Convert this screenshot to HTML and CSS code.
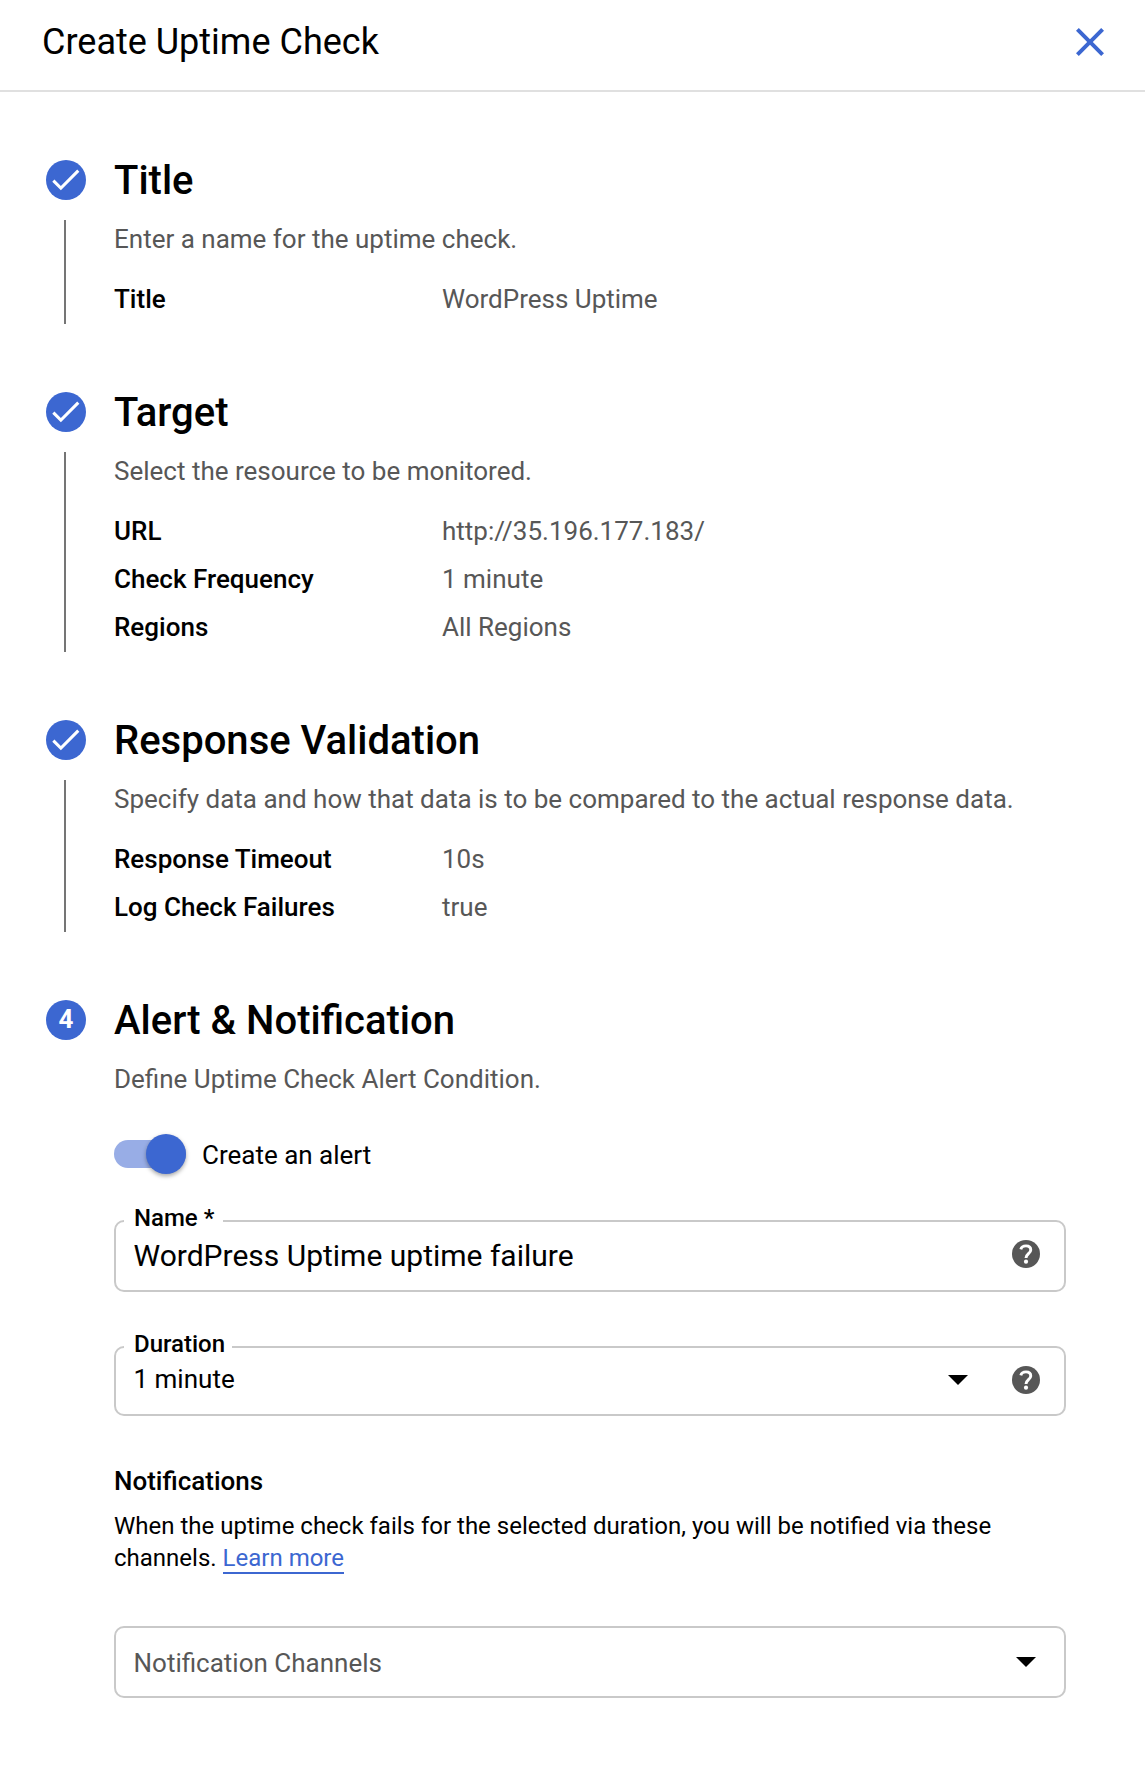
FILE: index.html
```html
<!DOCTYPE html>
<html lang="en">
<head>
<meta charset="utf-8">
<title>Create Uptime Check</title>
<link rel="stylesheet" href="styles.css">
</head>
<body>
<header class="header">
  <h1 class="header-title">Create Uptime Check</h1>
  <button class="close" aria-label="Close">
    <svg width="48" height="48" viewBox="0 0 24 24"><path d="M19 6.41L17.59 5 12 10.59 6.41 5 5 6.41 10.59 12 5 17.59 6.41 19 12 13.41 17.59 19 19 17.59 13.41 12z"/></svg>
  </button>
</header>
<main class="steps">
  <section class="step">
    <div class="rail">
      <span class="badge"><svg class="check" viewBox="0 0 24 24"><path d="M9 16.17L4.83 12l-1.42 1.41L9 19 21 7l-1.41-1.41z"/></svg></span>
      <span class="line"></span>
    </div>
    <div class="content">
      <h2 class="step-title">Title</h2>
      <p class="desc">Enter a name for the uptime check.</p>
      <dl class="summary">
        <dt>Title</dt><dd>WordPress Uptime</dd>
      </dl>
    </div>
  </section>
  <section class="step">
    <div class="rail">
      <span class="badge"><svg class="check" viewBox="0 0 24 24"><path d="M9 16.17L4.83 12l-1.42 1.41L9 19 21 7l-1.41-1.41z"/></svg></span>
      <span class="line"></span>
    </div>
    <div class="content">
      <h2 class="step-title">Target</h2>
      <p class="desc">Select the resource to be monitored.</p>
      <dl class="summary">
        <dt>URL</dt><dd>http://35.196.177.183/</dd>
        <dt>Check Frequency</dt><dd>1 minute</dd>
        <dt>Regions</dt><dd>All Regions</dd>
      </dl>
    </div>
  </section>
  <section class="step">
    <div class="rail">
      <span class="badge"><svg class="check" viewBox="0 0 24 24"><path d="M9 16.17L4.83 12l-1.42 1.41L9 19 21 7l-1.41-1.41z"/></svg></span>
      <span class="line"></span>
    </div>
    <div class="content">
      <h2 class="step-title">Response Validation</h2>
      <p class="desc">Specify data and how that data is to be compared to the actual response data.</p>
      <dl class="summary">
        <dt>Response Timeout</dt><dd>10s</dd>
        <dt>Log Check Failures</dt><dd>true</dd>
      </dl>
    </div>
  </section>
  <section class="step">
    <div class="rail"><span class="badge">4</span></div>
    <div class="content">
      <h2 class="step-title">Alert &amp; Notification</h2>
      <p class="desc">Define Uptime Check Alert Condition.</p>
      <div class="toggle-row">
        <span class="track"><span class="thumb"></span></span>
        <span class="toggle-label">Create an alert</span>
      </div>
      <div class="field name">
        <span class="label">Name *</span>
        <span class="value">WordPress Uptime uptime failure</span>
        <svg class="help" viewBox="2 2 20 20"><circle cx="12" cy="12" r="10"/><path class="mark" d="M8.300 8.700C8.700 7.100 10.100 6.200 12 6.200c2 0 3.400 1.100 3.400 2.900 0 2.500-3.400 2.900-3.400 5.700"/><circle class="dot" cx="12" cy="17.500" r="1.500"/></svg>
      </div>
      <div class="field duration">
        <span class="label">Duration</span>
        <span class="value">1 minute</span>
        <svg class="arrow" viewBox="0 0 20 10"><path d="M0 0h20L10 10z"/></svg>
        <svg class="help" viewBox="2 2 20 20"><circle cx="12" cy="12" r="10"/><path class="mark" d="M8.300 8.700C8.700 7.100 10.100 6.200 12 6.200c2 0 3.400 1.100 3.400 2.900 0 2.500-3.400 2.900-3.400 5.700"/><circle class="dot" cx="12" cy="17.500" r="1.500"/></svg>
      </div>
      <h3 class="sub-title">Notifications</h3>
      <p class="note">When the uptime check fails for the selected duration, you will be notified via these<br>channels. <a class="link">Learn more</a></p>
      <div class="field channels">
        <span class="value">Notification Channels</span>
        <svg class="arrow" viewBox="0 0 20 10"><path d="M0 0h20L10 10z"/></svg>
      </div>
    </div>
  </section>
</main>
</body>
</html>
```
FILE: styles.css
```css
* { box-sizing: border-box; }

body {
  margin: 0;
  min-height: 1772px;
  background: #fff;
  color: #000;
  font-family: Roboto, "Liberation Sans", sans-serif;
  font-size: 26px;
  line-height: 32px;
}

h1, h2, h3, p, dl, dd { margin: 0; }

.header {
  display: flex;
  align-items: flex-start;
  justify-content: space-between;
  height: 92px;
  padding: 18px 31px 0 42px;
  border-bottom: 2px solid #e0e0e0;
}
.header-title {
  padding-top: 2px;
  font-size: 36px;
  font-weight: 400;
  line-height: 44px;
}
.close {
  display: flex;
  padding: 0;
  border: 0;
  background: none;
}
.close svg { fill: #3c67d1; }

.steps { padding: 68px 79px 0 46px; }
.step {
  display: flex;
  gap: 28px;
  margin-bottom: 68px;
}
.step:last-child { margin-bottom: 0; }
.rail {
  display: flex;
  flex-direction: column;
  gap: 20px;
  width: 40px;
}
.badge {
  display: flex;
  align-items: center;
  justify-content: center;
  width: 40px;
  height: 40px;
  padding-bottom: 2px;
  border-radius: 50%;
  background: #3c67d1;
  color: #fff;
  font-weight: 700;
}
.check {
  width: 37px;
  height: 37px;
  margin-right: 2px;
  fill: #fff;
}
.line {
  flex: 1;
  width: 2px;
  margin-left: 18px;
  background: #757575;
}
.content {
  flex: 1;
  padding-bottom: 1px;
}
.step-title {
  margin-bottom: 21px;
  font-size: 40px;
  font-weight: 500;
  line-height: 42px;
}
.desc { color: #575757; }
.summary {
  display: grid;
  grid-template-columns: 328px 1fr;
  grid-auto-rows: 48px;
  margin-top: 20px;
  line-height: 48px;
}
.summary dt { font-weight: 500; }
.summary dd { color: #575757; }

.toggle-row {
  display: flex;
  align-items: center;
  gap: 16px;
  height: 40px;
  margin-top: 39px;
}
.track {
  display: flex;
  align-items: center;
  justify-content: flex-end;
  width: 72px;
  height: 28px;
  border-radius: 14px;
  background: #98ade6;
}
.thumb {
  width: 40px;
  height: 40px;
  border-radius: 50%;
  background: #3c67d1;
  box-shadow: 0 2px 4px rgba(0, 0, 0, 0.35);
}
.toggle-label { padding-top: 2px; }

.field {
  position: relative;
  display: flex;
  align-items: center;
  width: 952px;
  padding: 0 24px 0 17.5px;
  border: 2px solid #c9c9c9;
  border-radius: 10px;
}
.label {
  position: absolute;
  top: -18px;
  left: 8px;
  padding: 0 9px 0 10px;
  background: #fff;
  font-size: 24px;
  font-weight: 500;
  line-height: 28px;
}
.value { flex: 1; }
.name {
  height: 72px;
  margin-top: 46px;
  font-size: 30px;
}
.name .help { margin-bottom: 4px; }
.duration {
  height: 70px;
  margin-top: 54px;
}
.duration .label { padding-right: 7px; }
.duration .value { padding-bottom: 4px; }
.duration .arrow { margin: 0 44px 2px 0; }
.duration .help { margin-bottom: 2px; }
.channels {
  height: 72px;
  margin-top: 52px;
  padding-right: 28px;
  color: #575757;
}
.channels .value { padding-top: 2px; }
.arrow {
  width: 20px;
  height: 10px;
  fill: #000;
}
.help {
  width: 28px;
  height: 28px;
  fill: #575757;
}
.mark {
  fill: none;
  stroke: #fff;
  stroke-width: 2.1;
}
.dot { fill: #fff; }

.sub-title {
  margin-top: 49px;
  font-size: 26px;
  font-weight: 500;
}
.note {
  margin-top: 13px;
  font-size: 24px;
  white-space: nowrap;
}
.link {
  border-bottom: 2px solid #3c67d1;
  color: #3c67d1;
}
```
